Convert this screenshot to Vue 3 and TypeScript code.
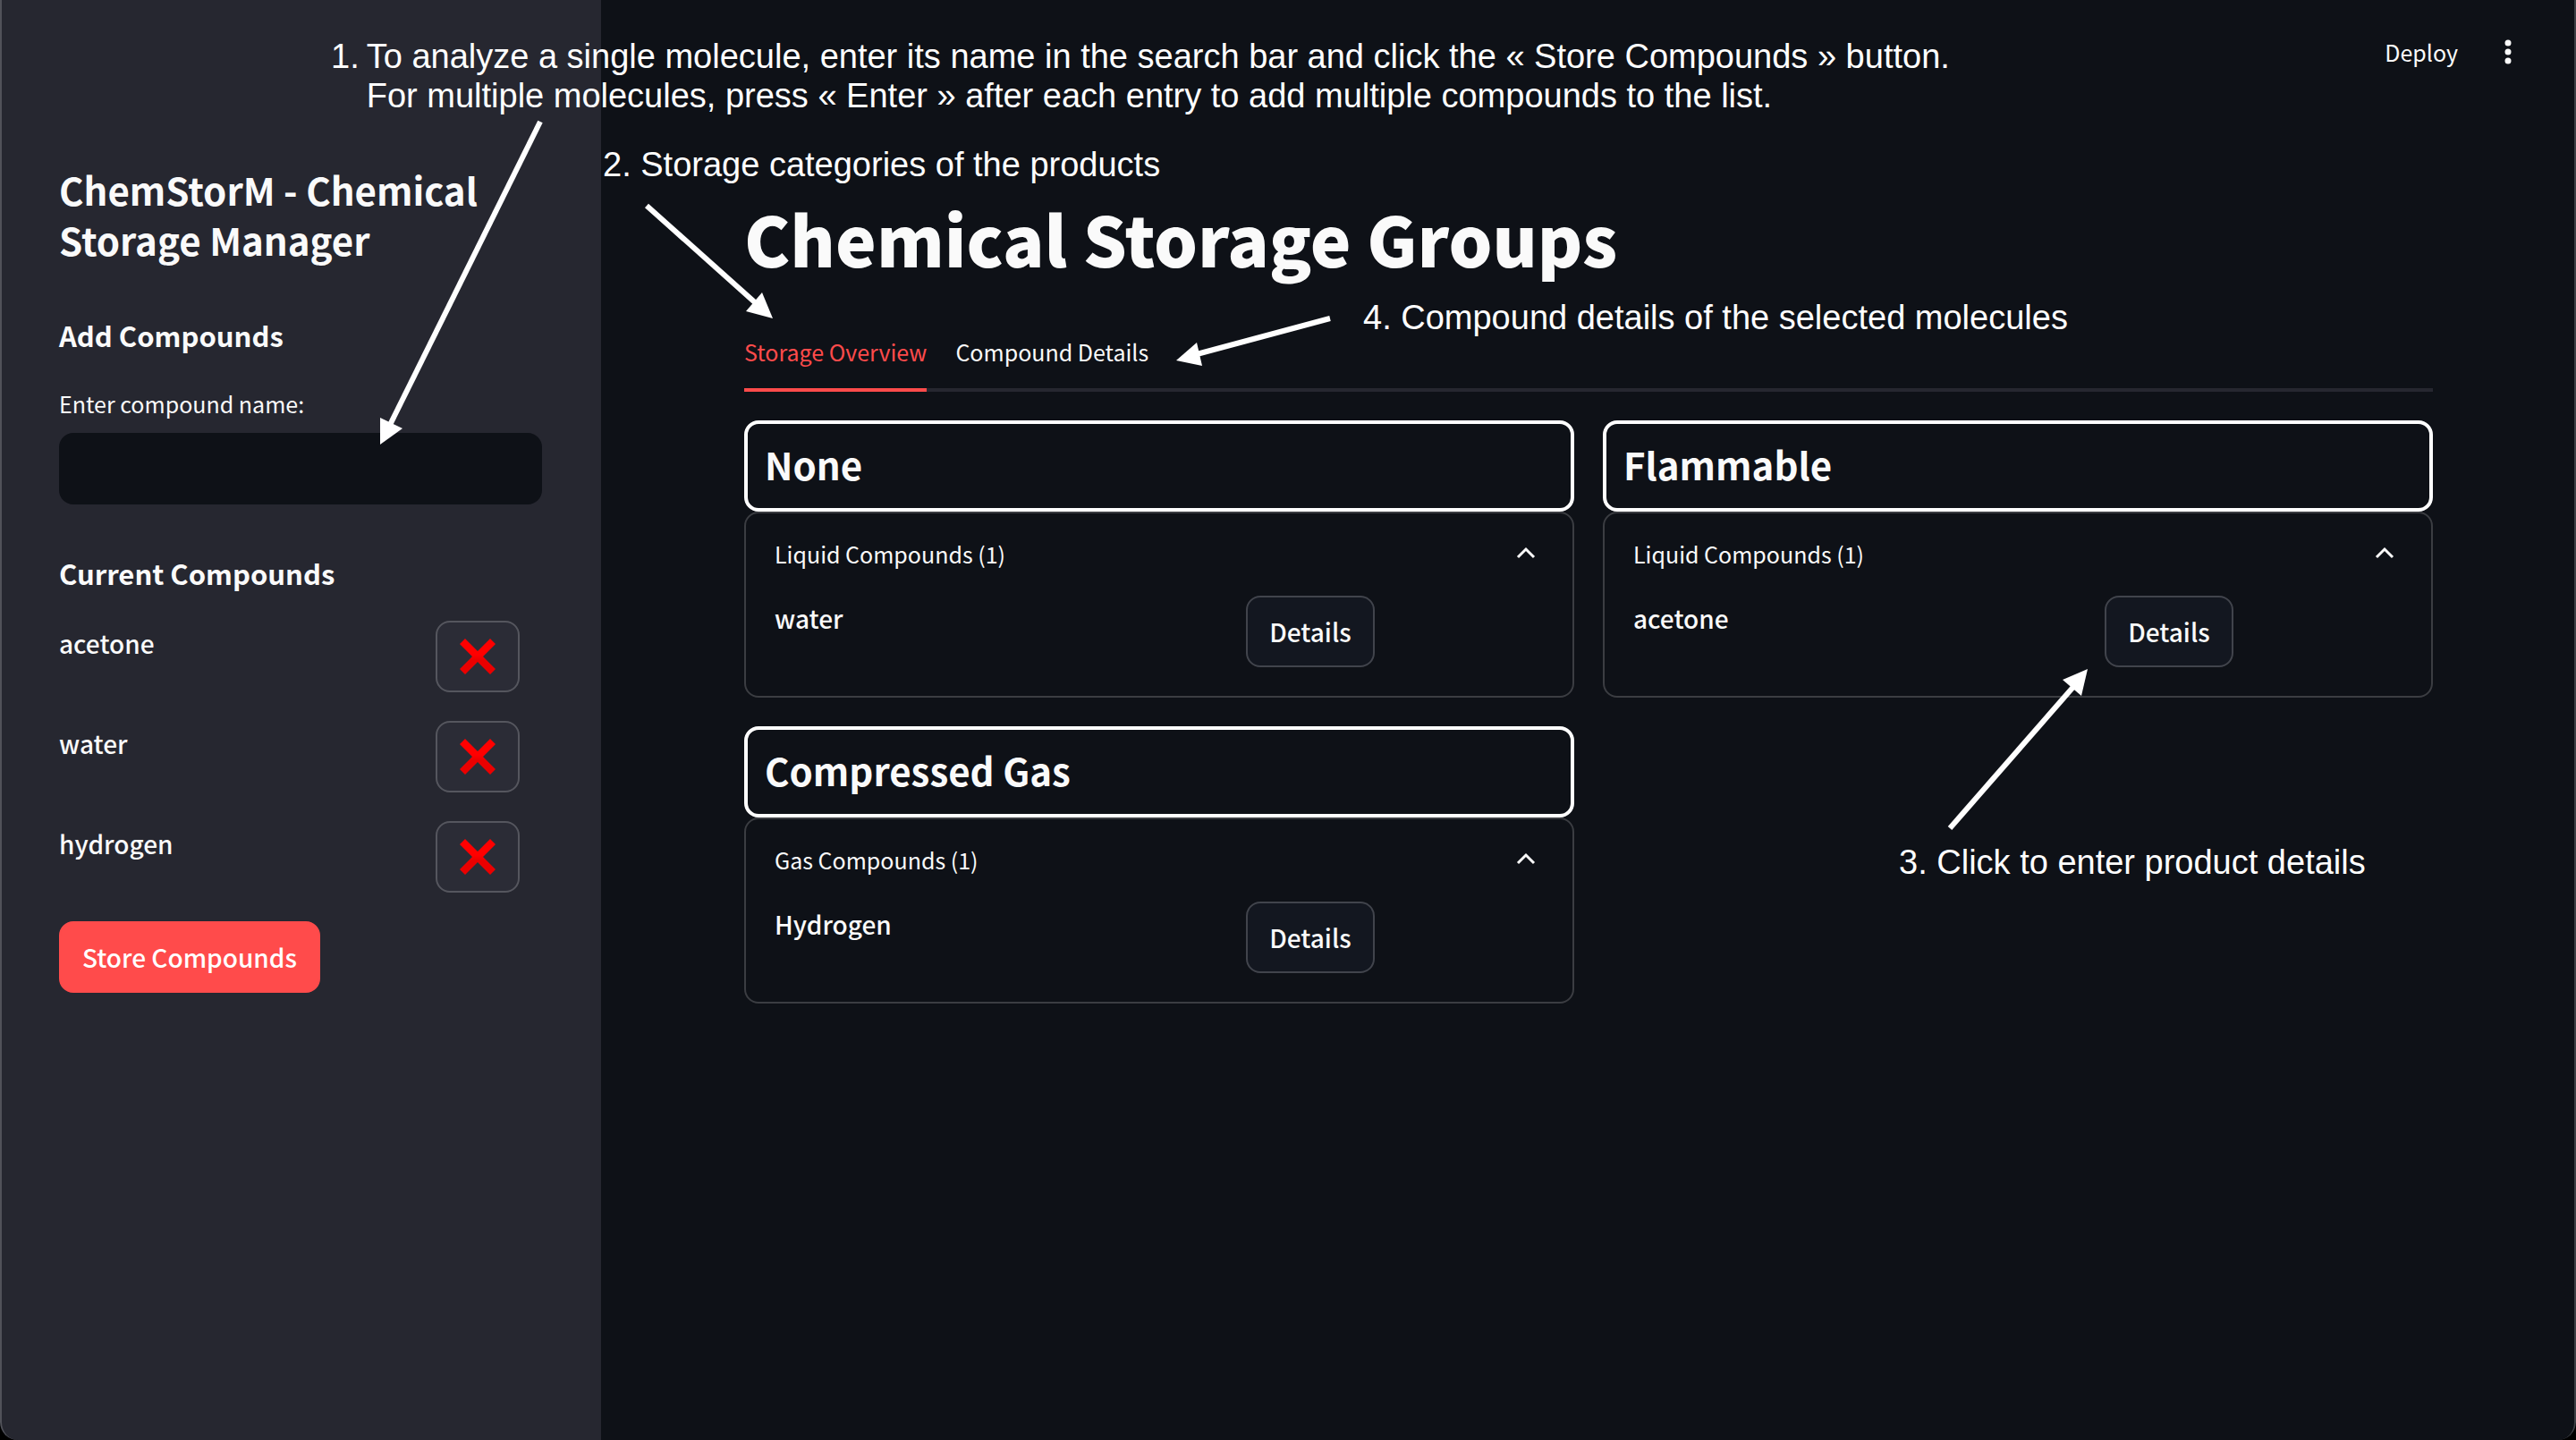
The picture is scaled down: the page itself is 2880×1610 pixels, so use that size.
<script setup lang="ts">
import { ref } from 'vue'

interface Group {
  name: string
  section: string
  compounds: string[]
}

const entry = ref('')
const compounds = ref<string[]>(['acetone', 'water', 'hydrogen'])
const tabs = ['Storage Overview', 'Compound Details']
const activeTab = ref(tabs[0])

const groups = ref<Group[]>([
  { name: 'None', section: 'Liquid Compounds', compounds: ['water'] },
  { name: 'Flammable', section: 'Liquid Compounds', compounds: ['acetone'] },
  { name: 'Compressed Gas', section: 'Gas Compounds', compounds: ['Hydrogen'] },
])

function addCompound() {
  const name = entry.value.trim()
  if (name) compounds.value.push(name)
  entry.value = ''
}

function removeCompound(index: number) {
  compounds.value.splice(index, 1)
}
</script>

<template>
  <div class="page">
    <aside class="sidebar">
      <h2 class="app-title">ChemStorM - Chemical Storage Manager</h2>
      <h3 class="side-heading">Add Compounds</h3>
      <label class="field-label" for="compound">Enter compound name:</label>
      <input id="compound" v-model="entry" class="field" type="text" @keyup.enter="addCompound" />
      <h3 class="side-heading current">Current Compounds</h3>
      <ul class="compound-list">
        <li v-for="(name, i) in compounds" :key="name" class="compound-row">
          <span>{{ name }}</span>
          <button class="btn remove" type="button" :aria-label="`Remove ${name}`" @click="removeCompound(i)">
            <svg width="40" height="40" viewBox="0 0 40 40" aria-hidden="true">
              <defs>
                <linearGradient id="cross" x1="0" y1="0" x2="0" y2="1">
                  <stop offset="0.45" stop-color="#ff0000" />
                  <stop offset="0.6" stop-color="#ea0000" />
                </linearGradient>
              </defs>
              <path
                fill="url(#cross)"
                d="M6 0 20 14 34 0 40 6 26 20 40 34 34 40 20 26 6 40 0 34 14 20 0 6Z"
              />
            </svg>
          </button>
        </li>
      </ul>
      <button class="btn primary" type="button">Store Compounds</button>
    </aside>

    <main class="main">
      <header class="toolbar">
        <button class="plain" type="button">Deploy</button>
        <button class="plain menu" type="button" aria-label="Main menu">
          <svg width="8" height="28" viewBox="0 0 8 28" fill="currentColor" aria-hidden="true">
            <circle cx="4" cy="4" r="3.5" />
            <circle cx="4" cy="14" r="3.5" />
            <circle cx="4" cy="24" r="3.5" />
          </svg>
        </button>
      </header>

      <div class="content">
        <h1 class="heading">Chemical Storage Groups</h1>
        <div class="tabs" role="tablist">
          <button
            v-for="tab in tabs"
            :key="tab"
            class="tab"
            :class="{ active: tab === activeTab }"
            type="button"
            role="tab"
            :aria-selected="tab === activeTab"
            @click="activeTab = tab"
          >
            {{ tab }}
          </button>
        </div>

        <div class="groups">
          <section v-for="group in groups" :key="group.name">
            <h2 class="group-name">{{ group.name }}</h2>
            <details class="expander" open>
              <summary class="summary">
                <span>{{ group.section }} ({{ group.compounds.length }})</span>
                <svg class="chevron" width="24" height="16" viewBox="0 0 24 16" aria-hidden="true">
                  <path d="M3 14 12 5 21 14" fill="none" stroke="currentColor" stroke-width="3" />
                </svg>
              </summary>
              <div v-for="name in group.compounds" :key="name" class="group-row">
                <span>{{ name }}</span>
                <div><button class="btn" type="button">Details</button></div>
              </div>
            </details>
          </section>
        </div>
      </div>
    </main>

    <div class="guide">
      <p class="note note-search">
        <span>1.</span>
        <span>
          To analyze a single molecule, enter its name in the search bar and click the « Store Compounds » button.<br />
          For multiple molecules, press « Enter » after each entry to add multiple compounds to the list.
        </span>
      </p>
      <p class="note note-storage">2. Storage categories of the products</p>
      <p class="note note-click">3. Click to enter product details</p>
      <p class="note note-details">4. Compound details of the selected molecules</p>
      <svg class="arrows" aria-hidden="true">
        <g stroke="#fff" stroke-width="6">
          <path d="M604 136 436 475" />
          <path d="M723 230 845 339" />
          <path d="M2180 926 2318 768" />
          <path d="M1487 356 1338 396" />
        </g>
        <g fill="#fff">
          <path d="M425 497 425 467 450 479Z" />
          <path d="M864 356 852 327 834 348Z" />
          <path d="M2334 748 2306 760 2327 778Z" />
          <path d="M1315 403 1338 383 1344 409Z" />
        </g>
      </svg>
    </div>
    <div class="frame"></div>
  </div>
</template>

<style>
body {
  margin: 0;
  background: #000;
}
</style>

<style scoped>
.page {
  position: relative;
  display: flex;
  min-height: 100vh;
  overflow: hidden;
  border-radius: 0 0 20px 20px;
  background: #0e1117;
  color: #fafafa;
  font-family: 'Noto Sans CJK SC', 'Noto Sans CJK JP', sans-serif;
  font-size: 28px;
  font-weight: 500;
  line-height: 50px;
}

h1,
h2,
h3,
p,
ul {
  margin: 0;
  padding: 0;
}

button,
input {
  box-sizing: border-box;
  color: inherit;
  font: inherit;
}

.sidebar {
  box-sizing: border-box;
  flex: 0 0 672px;
  padding: 184px 66px 66px;
  background: #262730;
}

.app-title {
  font-size: 42px;
  font-weight: 700;
  line-height: 56px;
}

.side-heading {
  margin-top: 59px;
  font-size: 31px;
  font-weight: 700;
  line-height: 40px;
}

.side-heading.current {
  margin-top: 57px;
}

.field-label {
  display: block;
  margin: 35px 0 12px;
  font-size: 25px;
  font-weight: 400;
  line-height: 42px;
}

.field {
  display: block;
  width: 100%;
  height: 80px;
  padding: 0 24px;
  border: 0;
  border-radius: 16px;
  background: #0e1117;
}

.compound-list {
  display: flex;
  flex-direction: column;
  gap: 32px;
  margin: 33px 0 32px;
  list-style: none;
}

.compound-row {
  display: flex;
  justify-content: space-between;
  padding-right: 25px;
}

.btn {
  display: flex;
  align-items: center;
  justify-content: center;
  height: 80px;
  padding: 0 24px;
  border: 2px solid #41444c;
  border-radius: 16px;
  background: #131720;
}

.btn.remove {
  width: 94px;
  border-color: #55565e;
  background: #2b2c36;
}

.btn.primary {
  border-color: #ff4b4b;
  background: #ff4b4b;
  color: #fff;
}

.main {
  flex: 1;
  min-width: 0;
}

.toolbar {
  display: flex;
  align-items: center;
  justify-content: flex-end;
  gap: 52px;
  height: 116px;
  padding-right: 72px;
}

.plain {
  padding: 0;
  border: 0;
  background: none;
  font-size: 25px;
  font-weight: 400;
  line-height: 40px;
}

.menu {
  display: flex;
}

.content {
  padding: 98px 160px;
}

.heading {
  font-size: 77px;
  font-weight: 900;
  line-height: 104px;
}

.tabs {
  display: flex;
  gap: 32px;
  margin: 36px 0 32px;
  box-shadow: inset 0 -4px #262730;
}

.tab {
  padding: 19px 0 21px;
  border: 0;
  border-bottom: 4px solid transparent;
  background: none;
  font-size: 25px;
  font-weight: 400;
  line-height: 40px;
}

.tab.active {
  border-color: #ff4b4b;
  color: #ff4b4b;
}

.groups {
  display: grid;
  grid-template-columns: 1fr 1fr;
  gap: 32px;
}

.group-name {
  padding: 19px 19px 23px;
  border: 4px solid #fff;
  border-radius: 16px;
  font-size: 42px;
  font-weight: 700;
  line-height: 52px;
}

.expander {
  padding: 25px 32px 32px;
  border: 2px solid #3b3d42;
  border-radius: 16px;
}

.summary {
  display: flex;
  align-items: flex-start;
  justify-content: space-between;
  margin-bottom: 27px;
  font-size: 25px;
  font-weight: 400;
  line-height: 40px;
}

.chevron {
  margin: 10px 8px 0;
}

.group-row {
  display: grid;
  grid-template-columns: 3fr 2fr;
  column-gap: 28px;
}

.guide,
.arrows,
.frame {
  position: absolute;
  inset: 0;
  width: 100%;
  height: 100%;
  pointer-events: none;
}

.note {
  position: absolute;
  color: #fff;
  font-family: 'Liberation Sans', Arial, sans-serif;
  font-size: 38px;
  font-weight: 400;
  line-height: 44px;
  white-space: nowrap;
}

.note-search {
  display: flex;
  gap: 8px;
  top: 41px;
  left: 370px;
}

.note-storage {
  top: 162px;
  left: 674px;
}

.note-click {
  top: 942px;
  left: 2123px;
}

.note-details {
  top: 333px;
  left: 1524px;
}

.frame {
  box-sizing: border-box;
  border: solid rgba(255, 255, 255, 0.2);
  border-width: 0 2px;
  border-radius: 0 0 20px 20px;
}
</style>
